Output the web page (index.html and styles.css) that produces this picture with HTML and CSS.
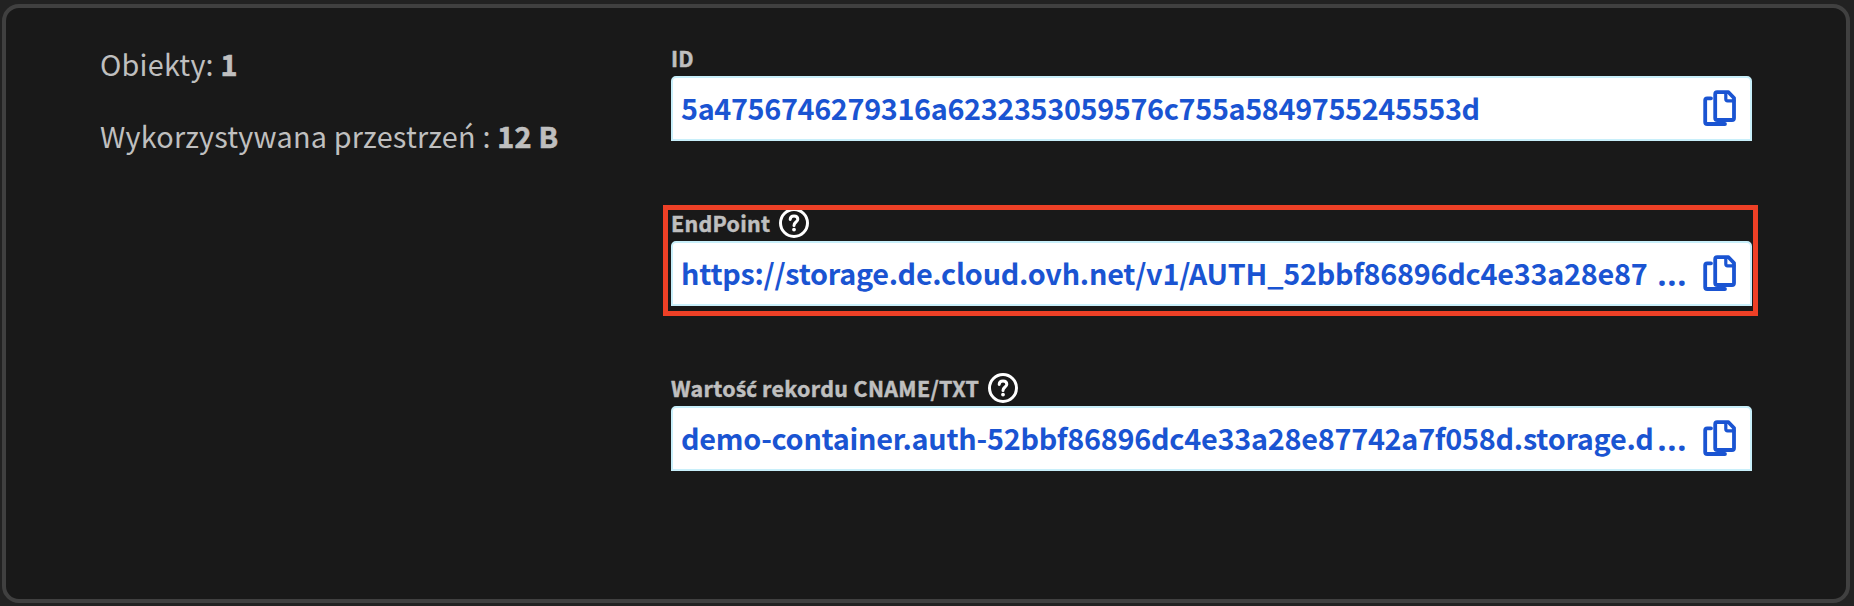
FILE: index.html
```html
<!DOCTYPE html>
<html lang="pl">
<head>
<meta charset="utf-8">
<title>Kontener</title>
<link rel="stylesheet" href="styles.css">
</head>
<body>
<svg class="defs" width="0" height="0">
  <symbol id="copy" viewBox="0 0 34 38">
    <path d="M9 8.3H5.2Q3.2 8.3 3.2 10.3V32Q3.2 34 5.2 34H23" />
    <path d="M15.2 2.2H26.5L32 8V28Q32 30 30 30H15.2Q13.2 30 13.2 28V4.2Q13.2 2.2 15.2 2.2Z" />
    <path stroke-width="3.2" d="M23.8 2.5V9Q23.8 10.8 25.6 10.8H32" />
  </symbol>
  <symbol id="help" viewBox="0 0 30 30">
    <circle cx="15" cy="15" r="13.5" />
    <path d="M11.2 11.4C11.3 8.8 13 7.9 15 7.9C17.2 7.9 18.8 9.2 18.8 11.2C18.8 14 15 14.1 15 17.4" />
    <circle class="dot" cx="15" cy="21.6" r="1.9" />
  </symbol>
</svg>
<main class="card">
  <section class="summary">
    <p class="stat">Obiekty: <b>1</b></p>
    <p class="stat stat-space">Wykorzystywana przestrzeń : <b>12 B</b></p>
  </section>
  <section class="fields">
    <div class="field">
      <div class="label">ID</div>
      <div class="box"><span class="value value-id">5a4756746279316a6232353059576c755a5849755245553d</span><svg class="copy"><use href="#copy"/></svg></div>
    </div>
    <div class="field">
      <div class="label"><span>EndPoint</span><svg class="help"><use href="#help"/></svg></div>
      <div class="box"><span class="value">https://storage.de.cloud.ovh.net/v1/AUTH_52bbf86896dc4e33a28e87</span><span class="dots">…</span><svg class="copy"><use href="#copy"/></svg></div>
      <div class="highlight"></div>
    </div>
    <div class="field">
      <div class="label"><span class="label-cname">Warto<span class="accented">ść</span> rekordu CNAME/TXT</span><svg class="help"><use href="#help"/></svg></div>
      <div class="box"><span class="value">demo-container.auth-52bbf86896dc4e33a28e87742a7f058d.storage.d</span><span class="dots">…</span><svg class="copy"><use href="#copy"/></svg></div>
    </div>
  </section>
</main>
</body>
</html>
```
FILE: styles.css
```css
* { box-sizing: border-box; }
body {
  margin: 0;
  height: 606px;
  padding: 4px 4px 3px 2px;
  overflow: hidden;
  background: #222;
  color: #bfbfbf;
  font-family: "Noto Sans CJK JP", "Noto Sans", sans-serif;
}
.defs { display: block; position: absolute; }
.card {
  display: flex;
  height: 599px;
  padding: 34px 94px 0;
  border: 4px solid #404040;
  border-radius: 17px;
  background: #191919;
}
.summary { width: 571px; }
.stat {
  margin: 0 0 31px;
  padding-top: 2px;
  font-size: 28.8px;
  line-height: 40px;
  letter-spacing: 0.21px;
  white-space: nowrap;
}
.stat:first-child { margin-bottom: 30px; }
.stat b { -webkit-text-stroke: 0.7px currentColor; letter-spacing: 0.2px; }
.fields { width: 1081px; display: flex; flex-direction: column; gap: 66px; }
.field { position: relative; }
.label {
  display: flex;
  align-items: flex-start;
  gap: 9px;
  height: 34px;
  padding-top: 1px;
  font-size: 21.4px;
  line-height: 30px;
  font-weight: 700;
  letter-spacing: 0.3px;
  -webkit-text-stroke: 0.5px currentColor;
  white-space: nowrap;
}
.label-cname { letter-spacing: 0.36px; }
.accented { font-family: "Noto Sans", sans-serif; font-size: 20.5px; line-height: 1; letter-spacing: 0; }
.help { width: 30px; height: 30px; stroke: #fff; stroke-width: 3; fill: none; stroke-linecap: round; }
.dot { fill: #fff; stroke: none; }
.box {
  display: flex;
  height: 65px;
  padding: 0 14px 0 8px;
  border: 2px solid #c8effa;
  border-radius: 5px 5px 0 0;
  background: #fff;
  color: #1a54d2;
  font-size: 28.8px;
  line-height: 59px;
  font-weight: 700;
  white-space: nowrap;
}
.value { letter-spacing: -0.25px; }
.value-id { margin-right: auto; letter-spacing: -0.345px; }
.dots { margin-left: auto; margin-right: 15px; font-family: "Noto Sans", sans-serif; font-size: 36px; font-weight: 600; }
.copy { flex: none; width: 34px; height: 38px; margin-top: 12px; stroke: currentColor; stroke-width: 3.8; fill: none; stroke-linejoin: round; stroke-linecap: round; }
.highlight {
  position: absolute;
  left: -8px;
  top: -2px;
  width: 1095px;
  height: 111px;
  border: 5px solid #ee4026;
}
```
